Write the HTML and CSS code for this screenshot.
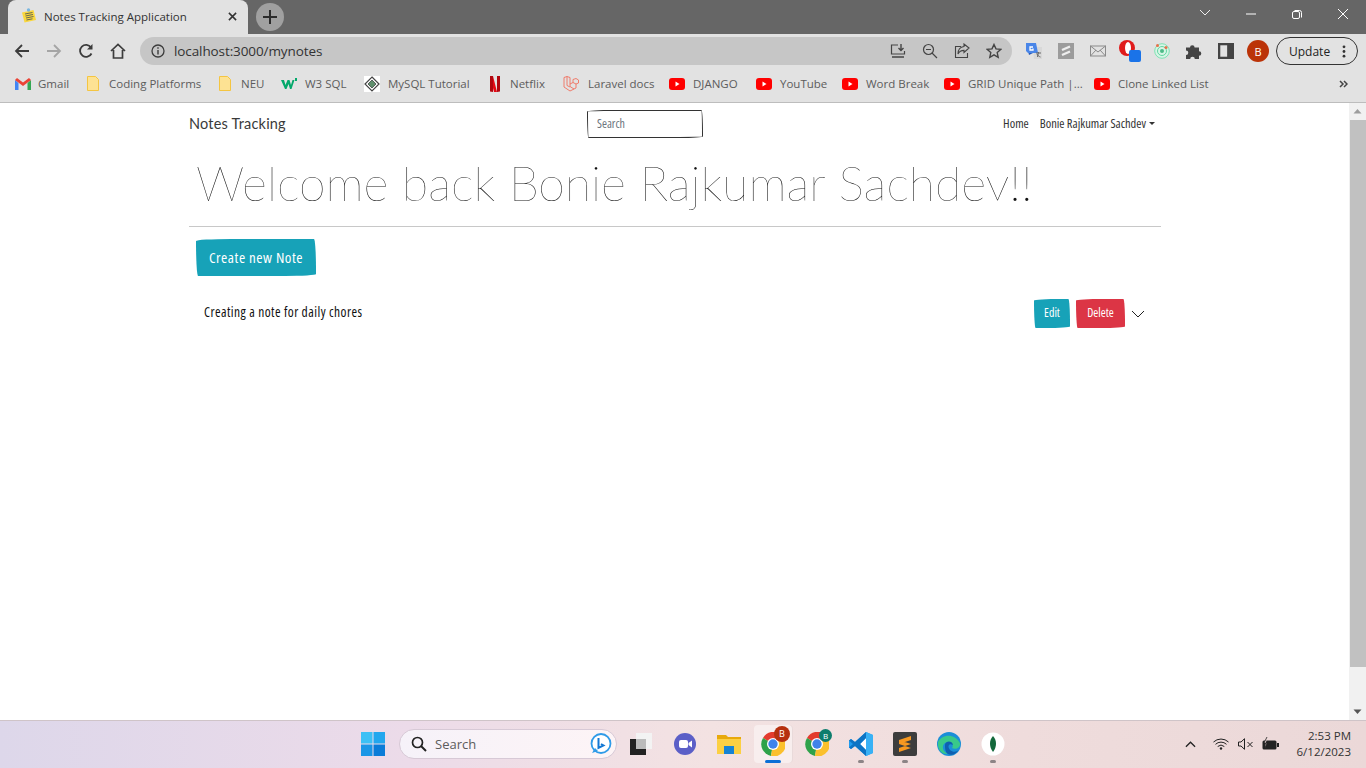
FILE: index.html
```html
<!DOCTYPE html>
<html lang="en">
<head>
<meta charset="utf-8">
<title>Notes Tracking Application</title>
<link rel="stylesheet" href="styles.css">
</head>
<body>
<div class="browser">
  <header class="tabstrip">
    <div class="tab">
      <svg class="fav" viewBox="0 0 16 16"><path d="M1 4.500l11.500-2.500 2.500 10-11.500 2.500z" fill="#f9d73e"/><path d="M4 6l7.500-1.500M4.500 8l7.500-1.500M5 10l7.500-1.500M5.500 12l6-1.200" stroke="#6a6a50" stroke-width="1"/><circle cx="7.500" cy="2" r="1.700" fill="#7ab7e0"/></svg>
      <span class="tab-title">Notes Tracking Application</span>
      <svg class="tab-x" viewBox="0 0 10 10"><path d="M1 1l8 8M9 1l-8 8" stroke="#333" stroke-width="1.700"/></svg>
    </div>
    <div class="newtab"><svg viewBox="0 0 14 14"><path d="M7 0v14M0 7h14" stroke="#2b2b2b" stroke-width="2"/></svg></div>
    <div class="winctl">
      <svg viewBox="0 0 46 28"><path d="M18 10l5 5 5-5" fill="none" stroke="#eee" stroke-width="1"/></svg>
      <svg viewBox="0 0 46 28"><path d="M18 14h10" stroke="#fff" stroke-width="1"/></svg>
      <svg viewBox="0 0 46 28"><rect x="18.500" y="11.500" width="7" height="7" rx="1.500" fill="none" stroke="#fff"/><path d="M20.500 10.500h5a2 2 0 0 1 2 2v5" fill="none" stroke="#fff"/></svg>
      <svg viewBox="0 0 46 28"><path d="M18 9l10 10M28 9l-10 10" stroke="#fff" stroke-width="1"/></svg>
    </div>
  </header>

  <nav class="toolbar">
    <div class="tbtn"><svg viewBox="0 0 16 16"><path d="M15 8H2M8 2L2 8l6 6" fill="none" stroke="#3c3c3c" stroke-width="1.800"/></svg></div>
    <div class="tbtn"><svg viewBox="0 0 16 16"><path d="M1 8h13M8 2l6 6-6 6" fill="none" stroke="#a5a5a5" stroke-width="1.800"/></svg></div>
    <div class="tbtn"><svg viewBox="0 0 16 16"><path d="M13.500 10.500A6 6 0 1 1 13 4.500" fill="none" stroke="#3c3c3c" stroke-width="1.800"/><path d="M14.500 1v5.500H9z" fill="#3c3c3c"/></svg></div>
    <div class="tbtn"><svg viewBox="0 0 16 16"><path d="M1 8l7-6.500L15 8M3.500 7v8h9V7" fill="none" stroke="#3c3c3c" stroke-width="1.700"/></svg></div>
    <div class="omnibox">
      <svg class="info" viewBox="0 0 14 14"><circle cx="7" cy="7" r="6" fill="none" stroke="#3c3c3c" stroke-width="1.300"/><path d="M7 6v4.500M7 3.200v1.600" stroke="#3c3c3c" stroke-width="1.400"/></svg>
      <span class="url">localhost:3000/mynotes</span>
      <div class="omni-actions">
        <div class="tbtn"><svg viewBox="0 0 16 16"><path d="M8 2H1.500v9h13V8" fill="none" stroke="#444" stroke-width="1.200"/><path d="M11 1v6M8.500 5l2.500 2.500L13.500 5M2 14h12" fill="none" stroke="#444" stroke-width="1.400"/></svg></div>
        <div class="tbtn"><svg viewBox="0 0 16 16"><circle cx="6.500" cy="6.500" r="5" fill="none" stroke="#444" stroke-width="1.200"/><path d="M10 10l5 5M4 6.500h5" stroke="#444" stroke-width="1.200"/></svg></div>
        <div class="tbtn"><svg viewBox="0 0 16 16"><path d="M7 3.500H1.500v11h12V10" fill="none" stroke="#444" stroke-width="1.100"/><path d="M15 5L10 1v2.500C6 4 4 7 4 11c1.500-3 3.500-3.600 6-3.600V9.500z" fill="none" stroke="#444" stroke-width="1.100"/></svg></div>
        <div class="tbtn"><svg viewBox="0 0 16 16"><path d="M8 1.500l2 4.400 4.700.5-3.500 3.200 1 4.700L8 11.900l-4.200 2.400 1-4.700L1.300 6.400l4.700-.5z" fill="none" stroke="#444" stroke-width="1.400"/></svg></div>
      </div>
    </div>
    <div class="extensions">
      <div class="tbtn"><svg viewBox="0 0 16 16"><path d="M7 4h9v12H8z" fill="#d8d8d8"/><path d="M0 0h10l2 10H2L0 8z" fill="#4a86e8"/><path d="M3 12l4-2H2.500z" fill="#2a5bb8"/><path d="M7 4H4v3h3V5.500" fill="none" stroke="#fff" stroke-width="1.300"/><path d="M10 10h5M12.500 9l-1 5M11 11c.5 1.500 2 2.500 3.500 3" fill="none" stroke="#666"/></svg></div>
      <div class="tbtn"><svg viewBox="0 0 16 16"><rect width="16" height="16" fill="#9c9c9c"/><path d="M4 7l8-3.500M4 12l8-3.500" stroke="#eee" stroke-width="2.400"/></svg></div>
      <div class="tbtn"><svg viewBox="0 0 16 16"><rect x=".5" y="3" width="15" height="10" fill="none" stroke="#8a8a8a"/><path d="M.5 3L8 9l7.500-6M.5 13l5.500-6M15.500 13L10 7" fill="none" stroke="#8a8a8a"/></svg></div>
      <div class="tbtn"><svg class="ext-opera" viewBox="0 0 22 22"><circle cx="8" cy="8" r="8" fill="#e01b1b"/><ellipse cx="9" cy="8" rx="3" ry="6" fill="#fff"/><rect x="10" y="10" width="12" height="12" rx="2" fill="#1a73e8"/></svg></div>
      <div class="tbtn"><svg viewBox="0 0 16 16"><circle cx="8" cy="8" r="7.300" fill="#d8f5e6" stroke="#7de2b4"/><circle cx="8" cy="8" r="4.500" fill="none" stroke="#63d6a2"/><circle cx="8" cy="8" r="2" fill="#4dbb88"/><circle cx="3.500" cy="2.500" r="1.500" fill="#e8704a"/><circle cx="12" cy="4.500" r="1.500" fill="#e8704a"/></svg></div>
      <div class="tbtn"><svg viewBox="0 0 16 16"><path d="M0 4.500h4a2.300 2.300 0 1 1 4.600 0H13v3.700a2.300 2.300 0 1 1 0 4.600V16H8.800a2.300 2.300 0 1 0-4.600 0H0v-4a2.300 2.300 0 1 0 0-4.600z" fill="#444"/></svg></div>
      <div class="tbtn"><svg viewBox="0 0 14 14"><rect x="1" y="1" width="12" height="12" fill="none" stroke="#444" stroke-width="2"/><rect x="8" y="1" width="5" height="12" fill="#444"/></svg></div>
      <div class="tbtn"><span class="avatar">B</span></div>
      <div class="update"><span>Update</span><svg viewBox="0 0 4 14"><circle cx="2" cy="2" r="1.500" fill="#333"/><circle cx="2" cy="7" r="1.500" fill="#333"/><circle cx="2" cy="12" r="1.500" fill="#333"/></svg></div>
    </div>
  </nav>

  <nav class="bookmarks">
    <a class="bm bm-gmail"><svg viewBox="0 0 16 12"><path d="M0 2v10h3.500V5z" fill="#4285f4"/><path d="M16 2v10h-3.500V5z" fill="#34a853"/><path d="M0 2l8 6 8-6-2-2-6 4.500L2 0z" fill="#ea4335"/></svg>Gmail</a>
    <a class="bm bm-coding"><svg viewBox="0 0 12 15"><path d="M.5.500h8l3 3v11H.5z" fill="#fde293" stroke="#f4c542"/></svg>Coding Platforms</a>
    <a class="bm bm-neu"><svg viewBox="0 0 12 15"><path d="M.5.500h8l3 3v11H.5z" fill="#fde293" stroke="#f4c542"/></svg>NEU</a>
    <a class="bm bm-w3"><svg viewBox="0 0 16 12"><path d="M0 2h3l1.500 5L6.500 2h2L10 7l1.500-5h2L10.500 11h-1.500L7.500 6 5.500 11H4z" fill="#04a86b"/><path d="M14 0h2v3h-2z" fill="#04a86b"/></svg>W3 SQL</a>
    <a class="bm bm-mysql"><svg viewBox="0 0 16 16"><rect width="16" height="16" fill="#fff"/><path d="M8 1l7 7-7 7-7-7z" fill="none" stroke="#444" stroke-width="1.200"/><path d="M8 4l4 4-4 4-4-4z" fill="#5f8f6d" stroke="#333" stroke-width=".7"/></svg>MySQL Tutorial</a>
    <a class="bm bm-netflix"><svg viewBox="0 0 12 16"><path d="M1 0h3l4 16H5z" fill="#e50914"/><path d="M1 0h3v16l-3-.5zM8 0h3v15.500L8 16z" fill="#b1060f"/></svg>Netflix</a>
    <a class="bm bm-laravel"><svg viewBox="0 0 16 16"><path d="M1 1.500l3-1 3 1v9l4 2.500M1 1.500v9.500l6 4 6-3V8L10 6.500 7 8M4 .5v9l3 1.500M10 6.500V3.500l3-1 2.500 1.500V7L13 8" fill="none" stroke="#f0705f" stroke-width=".9"/></svg>Laravel docs</a>
    <a class="bm bm-django"><svg viewBox="0 0 16 12"><use href="#yt"/></svg>DJANGO</a>
    <a class="bm bm-youtube"><svg viewBox="0 0 16 12"><use href="#yt"/></svg>YouTube</a>
    <a class="bm bm-word"><svg viewBox="0 0 16 12"><use href="#yt"/></svg>Word Break</a>
    <a class="bm bm-grid"><svg viewBox="0 0 16 12"><use href="#yt"/></svg>GRID Unique Path |...</a>
    <a class="bm bm-clone"><svg viewBox="0 0 16 12"><use href="#yt"/></svg>Clone Linked List</a>
    <svg class="more" viewBox="0 0 9 8"><path d="M1 1l3 3-3 3M5 1l3 3-3 3" fill="none" stroke="#444" stroke-width="1.500"/></svg>
  </nav>

  <div class="viewport">
    <main class="page">
      <div class="container">
        <div class="navbar">
          <a class="brand">Notes Tracking</a>
          <input class="search" type="text" placeholder="Search">
          <div class="navlinks">
            <a>Home</a>
            <a class="dropdown">Bonie Rajkumar Sachdev<i class="caret"></i></a>
          </div>
        </div>
        <h1 class="welcome">Welcome back Bonie Rajkumar Sachdev!!</h1>
        <hr class="rule">
        <button class="btn btn-info btn-lg">Create new Note</button>
        <div class="note">
          <span class="note-title">Creating a note for daily chores</span>
          <div class="note-actions">
            <button class="btn btn-info btn-sm">Edit</button>
            <button class="btn btn-danger btn-sm">Delete</button>
            <svg class="chevron" viewBox="0 0 14 8"><path d="M1 1l6 6 6-6" fill="none" stroke="#222" stroke-width="1"/></svg>
          </div>
        </div>
      </div>
    </main>
    <aside class="scrollbar">
      <svg viewBox="0 0 17 17"><path d="M4.500 10.500L8.500 6l4 4.500z" fill="#9d9d9d"/></svg>
      <div class="thumb"></div>
      <svg viewBox="0 0 17 17"><path d="M4.500 6.500L8.500 11l4-4.500z" fill="#555"/></svg>
    </aside>
  </div>

  <footer class="taskbar">
    <div class="tb-item"><svg class="ic24" viewBox="0 0 24 24"><rect width="11.500" height="11.500" fill="#3cc0f5"/><rect x="12.500" width="11.500" height="11.500" fill="#22a7ee"/><rect y="12.500" width="11.500" height="11.500" fill="#1a96e6"/><rect x="12.500" y="12.500" width="11.500" height="11.500" fill="#0a7cd8"/></svg></div>
    <div class="tb-search">
      <svg viewBox="0 0 16 16"><circle cx="6.500" cy="6.500" r="5" fill="none" stroke="#222" stroke-width="1.700"/><path d="M10 10l5 5" stroke="#222" stroke-width="1.900"/></svg>
      <span>Search</span>
      <svg class="bing" viewBox="0 0 22 22"><circle cx="11" cy="10.500" r="9.500" fill="#fff" stroke="#2f9be8" stroke-width="1.800"/><path d="M2 20l3-5 3 3z" fill="#2f9be8"/><path d="M8.500 5v10l5-2.500-2.500-1.500" fill="none" stroke="#1478d4" stroke-width="2"/></svg>
    </div>
    <div class="tb-apps">
      <div class="tb-item"><svg class="ic24" viewBox="0 0 24 24"><rect x="7" y="1" width="16" height="16" fill="#f3f3f3"/><rect x="1" y="7" width="16" height="16" fill="#222"/><rect x="7" y="7" width="10" height="10" fill="#bbb"/></svg></div>
      <div class="tb-item"><svg class="ic24" viewBox="0 0 24 24"><circle cx="12" cy="12" r="11" fill="#5b5fc7"/><rect x="6" y="8" width="9" height="8" rx="2" fill="#fff"/><path d="M15.500 11l3.500-2.500v7L15.500 13z" fill="#fff"/></svg></div>
      <div class="tb-item"><svg class="ic24" viewBox="0 0 24 24"><path d="M0 3h9l2 2h13v17H0z" fill="#e8a90c"/><path d="M0 7h24v15H0z" fill="#fcd043"/><rect x="7" y="14" width="10" height="8" fill="#1783d4"/></svg></div>
      <div class="tb-item active">
        <svg class="ic24" viewBox="0 0 24 24"><use href="#chrome"/></svg>
        <span class="tb-badge">B</span>
        <span class="run-bar"></span>
      </div>
      <div class="tb-item">
        <svg class="ic24" viewBox="0 0 24 24"><use href="#chrome"/></svg>
        <span class="tb-badge teal">B</span>
      </div>
      <div class="tb-item"><svg class="ic24" viewBox="0 0 24 24"><path d="M17 0l7 3v18l-7 3L6 14l-4 3-2-1.500V8.500L2 7l4 3z" fill="#1f9cf0"/><path d="M17 6l-6 6 6 6z" fill="#fff"/><path d="M17 0v24l7-3V3z" fill="#38b1f5"/><path d="M17 0L6 10 2 7 0 8.500 4 12l-4 3.500L2 17l4-3 11 10V18l-6-6 6-6z" fill="#0d74c4"/></svg><span class="run-dot"></span></div>
      <div class="tb-item"><svg class="ic24" viewBox="0 0 24 24"><rect width="24" height="24" rx="2" fill="#3d3d3d"/><path d="M18 4L6 8v4l12-4zM6 8v4l12 4v-4zM18 12v4L6 20v-4z" fill="#f89820"/></svg><span class="run-dot"></span></div>
      <div class="tb-item"><svg class="ic24" viewBox="0 0 24 24"><circle cx="12" cy="12" r="12" fill="#1b8fd8"/><path d="M1 10C4 3 17 0 23 11c1 5-5 7-8 5 3-4-3-8-7-5-4 3-2 9 3 11-6 1-11-5-10-12z" fill="#39c98a"/><path d="M8 13c0-4 7-5 8 0-4-2-6 1-3 5 3 3 8 2 9-1-2 5-8 7-11 5-3-2-3-6-3-9z" fill="#0f5fb0"/></svg></div>
      <div class="tb-item"><svg class="ic24" viewBox="0 0 24 24"><circle cx="12" cy="12" r="11.500" fill="#fff"/><path d="M12 4c4 4 4 11 0 16-4-5-4-12 0-16z" fill="#13683b"/></svg><span class="run-dot"></span></div>
    </div>
    <div class="tray">
      <svg class="t-up" viewBox="0 0 12 7"><path d="M1 6l5-5 5 5" fill="none" stroke="#222" stroke-width="1.400"/></svg>
      <svg class="t-wifi" viewBox="0 0 16 12"><path d="M.5 4a11 11 0 0 1 15 0M2.500 6.300a8 8 0 0 1 11 0M4.700 8.500a5 5 0 0 1 6.600 0" fill="none" stroke="#222"/><circle cx="8" cy="10.500" r="1.200" fill="#222"/></svg>
      <svg class="t-vol" viewBox="0 0 16 12"><path d="M.5 4h2.500L6.500.7v10.600L3 8H.5z" fill="none" stroke="#222"/><path d="M9.500 4l5 5M14.500 4l-5 5" stroke="#222"/></svg>
      <svg class="t-bat" viewBox="0 0 18 14"><rect x=".5" y="3.500" width="14" height="9" rx="1.500" fill="#222"/><rect x="15" y="6" width="2" height="4" fill="#222"/><path d="M5 0L2 6h3L3 11" fill="#f0dcdc" stroke="#222" stroke-width=".8"/></svg>
      <div class="clock"><span>2:53 PM</span><span>6/12/2023</span></div>
    </div>
  </footer>
</div>

<svg class="defs" aria-hidden="true">
  <symbol id="yt" viewBox="0 0 16 12"><rect width="16" height="12" rx="3" fill="#f00"/><path d="M6.500 3.500v5l4-2.500z" fill="#fff"/></symbol>
  <symbol id="chrome" viewBox="0 0 24 24"><path d="M12 12L2 6a12 12 0 0 1 21 0z" fill="#e33b2e"/><path d="M12 12L2 6a12 12 0 0 0 8 18z" fill="#2fa24a"/><path d="M12 12l11-6a12 12 0 0 1-13 18z" fill="#fbc02d"/><circle cx="12" cy="12" r="6" fill="#fff"/><circle cx="12" cy="12" r="4.700" fill="#3f83ea"/></symbol>
</svg>
</body>
</html>
```
FILE: styles.css
```css
* { box-sizing: border-box; }
html, body { margin: 0; height: 100%; overflow: hidden; }
body { font-family: "Open Sans", "Noto Sans", sans-serif; background: #fff; }
.defs { display: none; }
svg { display: block; flex: none; }

.browser { width: 1366px; height: 768px; display: flex; flex-direction: column; }

/* tab strip */
.tabstrip { height: 34px; background: #666; display: flex; padding-left: 8px; align-items: flex-end; position: relative; }
.tab { width: 240px; height: 34px; background: #e2e2e2; border-radius: 8px 8px 0 0; display: flex; align-items: center; padding: 0 11px 2px 13px; font-size: 11.500px; color: #333; }
.fav { width: 16px; height: 16px; }
.tab-title { margin-left: 7px; flex: 1; white-space: nowrap; }
.tab-x { width: 9px; height: 9px; }
.newtab { width: 28px; height: 28px; border-radius: 50%; background: #a0a0a0; margin: 0 0 3px 8px; display: flex; align-items: center; justify-content: center; }
.newtab svg { width: 14px; height: 14px; }
.winctl { margin-left: auto; align-self: flex-start; display: flex; }
.winctl svg { width: 46px; height: 28px; }

/* toolbar */
.toolbar { height: 34px; background: #e2e2e2; display: flex; align-items: center; padding-left: 6px; }
.tbtn { width: 32px; height: 28px; display: flex; align-items: center; justify-content: center; flex: none; }
.tbtn svg { width: 16px; height: 16px; }
.tbtn .ext-opera { width: 22px; height: 22px; }
.omnibox { margin-left: 6px; width: 872px; height: 28px; border-radius: 14px; background: #c6c6c6; display: flex; align-items: center; padding: 0 2px 0 11px; }
.info { width: 14px; height: 14px; }
.url { margin-left: 9px; font-size: 13.500px; color: #333; letter-spacing: -.1px; }
.omni-actions { margin-left: auto; display: flex; }
.extensions { margin-left: 6px; display: flex; align-items: center; }
.avatar { width: 22px; height: 22px; border-radius: 50%; background: #bb3308; color: #fff; font-size: 11px; display: flex; align-items: center; justify-content: center; }
.update { margin-left: 2px; width: 82px; height: 28px; border: 1px solid #333; border-radius: 14px; display: flex; align-items: center; justify-content: space-between; padding: 0 11px 0 12px; font-size: 12px; color: #222; }
.update svg { width: 4px; height: 13px; }

/* bookmarks */
.bookmarks { height: 35px; background: #e2e2e2; border-bottom: 1px solid #bdbdbd; display: flex; align-items: center; padding: 0 0 3px 15px; }
.bm { display: flex; align-items: center; gap: 7px; font-size: 11.500px; color: #5c5c5c; white-space: nowrap; }
.bm svg { width: 16px; height: 16px; }
.bm-gmail { width: 72px; }
.bm-coding { width: 132px; }
.bm-coding svg, .bm-neu svg { width: 12px; height: 15px; margin-right: 3px; }
.bm-neu { width: 62px; }
.bm-w3 { width: 83px; gap: 8px; }
.bm-mysql { width: 123px; gap: 8px; }
.bm-netflix { width: 76px; }
.bm-laravel { width: 106px; gap: 9px; }
.bm-django { width: 87px; gap: 8px; }
.bm-youtube { width: 86px; gap: 8px; }
.bm-word { width: 102px; gap: 8px; }
.bm-grid { width: 150px; gap: 8px; }
.bm-clone { width: 245px; gap: 8px; }
.more { width: 9px; height: 8px; }

/* page */
.viewport { height: 617px; display: flex; background: #fff; }
.page { flex: 1; padding-left: 189px; }
.container { width: 972px; }
.navbar { height: 42px; display: flex; align-items: center; position: relative; font-family: "Open Sans", sans-serif; font-stretch: 75%; }
.brand { font-family: "Lato", sans-serif; font-size: 14.500px; color: #3a3a3a; letter-spacing: .2px; width: 398px; padding-bottom: 2px; }
.search { width: 116px; height: 28px; border: 1px solid #333; border-radius: 255px 15px 225px 15px / 15px 225px 15px 255px; padding: 0 0 1px 9px; font-family: "Open Sans", sans-serif; font-stretch: 75%; font-size: 12px; background: #fff; }
.search::placeholder { color: #6c757d; }
.navlinks { margin-left: auto; margin-right: 6px; display: flex; gap: 11px; font-size: 12.500px; color: #333; padding-bottom: 1px; }
.dropdown { display: flex; align-items: center; }
.caret { width: 0; height: 0; margin-left: 3px; border: 3.500px solid transparent; border-top-color: #333; border-bottom: 0; }
.welcome { margin: 0; padding: 9px 0 0 7px; height: 80px; font: 100 48.200px/56px "Lato", sans-serif; color: #111; white-space: nowrap; }
.rule { border: 0; border-top: 1px solid #c8c8c8; margin: 1px 0 12px; }
.btn { border: 0; color: #fff; font-family: "Open Sans", sans-serif; font-stretch: 75%; white-space: nowrap; display: flex; align-items: center; justify-content: center; padding: 0 0 2px; border-radius: 255px 15px 225px 15px / 15px 225px 15px 255px; }
.btn-info { background: #17a2b8; }
.btn-danger { background: #dc3545; }
.btn-lg { width: 120px; height: 37px; margin-left: 7px; font-size: 15px; letter-spacing: .55px; }
.btn-sm { height: 29px; font-size: 12px; }
.note { margin-top: 23px; display: flex; align-items: center; justify-content: space-between; padding: 0 16px 0 15px; height: 29px; font-family: "Open Sans", sans-serif; font-stretch: 75%; font-size: 13.500px; color: #111; }
.note-title { letter-spacing: .45px; padding-bottom: 3px; }
.note-actions { display: flex; align-items: center; gap: 6px; }
.note-actions .btn-info { width: 36px; margin-left: 1px; }
.note-actions .btn-danger { width: 49px; }
.chevron { width: 14px; height: 8px; }

.scrollbar { width: 17px; background: #f1f1f1; display: flex; flex-direction: column; }
.scrollbar svg { width: 17px; height: 17px; }
.thumb { flex: 1; background: #c1c1c1; margin-bottom: 36px; margin-left: 1px; }

/* taskbar */
.taskbar { height: 48px; border-top: 1px solid #cfc4c8; background: linear-gradient(90deg, #ddd7ea 0%, #ecdbe9 30%, #f3e2e2 52%, #efdcdc 75%, #ebd8d8 100%); display: flex; align-items: center; padding: 0 0 1px 351px; }
.tb-item { width: 44px; height: 38px; display: flex; align-items: center; justify-content: center; position: relative; border-radius: 4px; flex: none; }
.ic24 { width: 24px; height: 24px; }
.tb-search { margin-left: 4px; width: 218px; height: 30px; border: 1px solid #d7c9d6; border-radius: 15px; background: linear-gradient(90deg, #f6f2f9, #fdf4f6); display: flex; align-items: center; padding-left: 11px; font-size: 13px; color: #5c5c5c; flex: none; }
.tb-search svg { width: 16px; height: 16px; }
.tb-search span { margin-left: 8px; }
.tb-search .bing { width: 22px; height: 22px; margin-left: auto; margin-right: 4px; }
.tb-apps { margin-left: 2px; display: flex; }
.active { width: 38px; margin: 0 3px; background: #f8eeee; box-shadow: 1px 0 0 #e9dada; }
.tb-badge { position: absolute; top: 1px; right: 2px; width: 16px; height: 16px; border-radius: 50%; background: #b6300f; color: #fff; font-size: 9px; line-height: 16px; text-align: center; }
.tb-badge.teal { background: #0d7d6d; font-size: 8px; top: 4px; right: 7px; width: 13px; height: 13px; line-height: 13px; }
.run-bar { position: absolute; bottom: 0; left: 11px; width: 16px; height: 3px; border-radius: 2px; background: #0a6fd6; }
.run-dot { position: absolute; bottom: 0; left: 19px; width: 6px; height: 3px; border-radius: 2px; background: #8c8486; }
.tray { margin-left: auto; display: flex; align-items: center; padding-right: 15px; color: #222; }
.t-up { width: 11px; height: 7px; }
.t-wifi { width: 16px; height: 12px; margin-left: 17px; }
.t-vol { width: 16px; height: 12px; margin-left: 9px; }
.t-bat { width: 18px; height: 14px; margin-left: 8px; }
.clock { margin-left: 15px; width: 56px; display: flex; flex-direction: column; align-items: flex-end; font-size: 11.500px; line-height: 16px; color: #333; white-space: nowrap; }
```
